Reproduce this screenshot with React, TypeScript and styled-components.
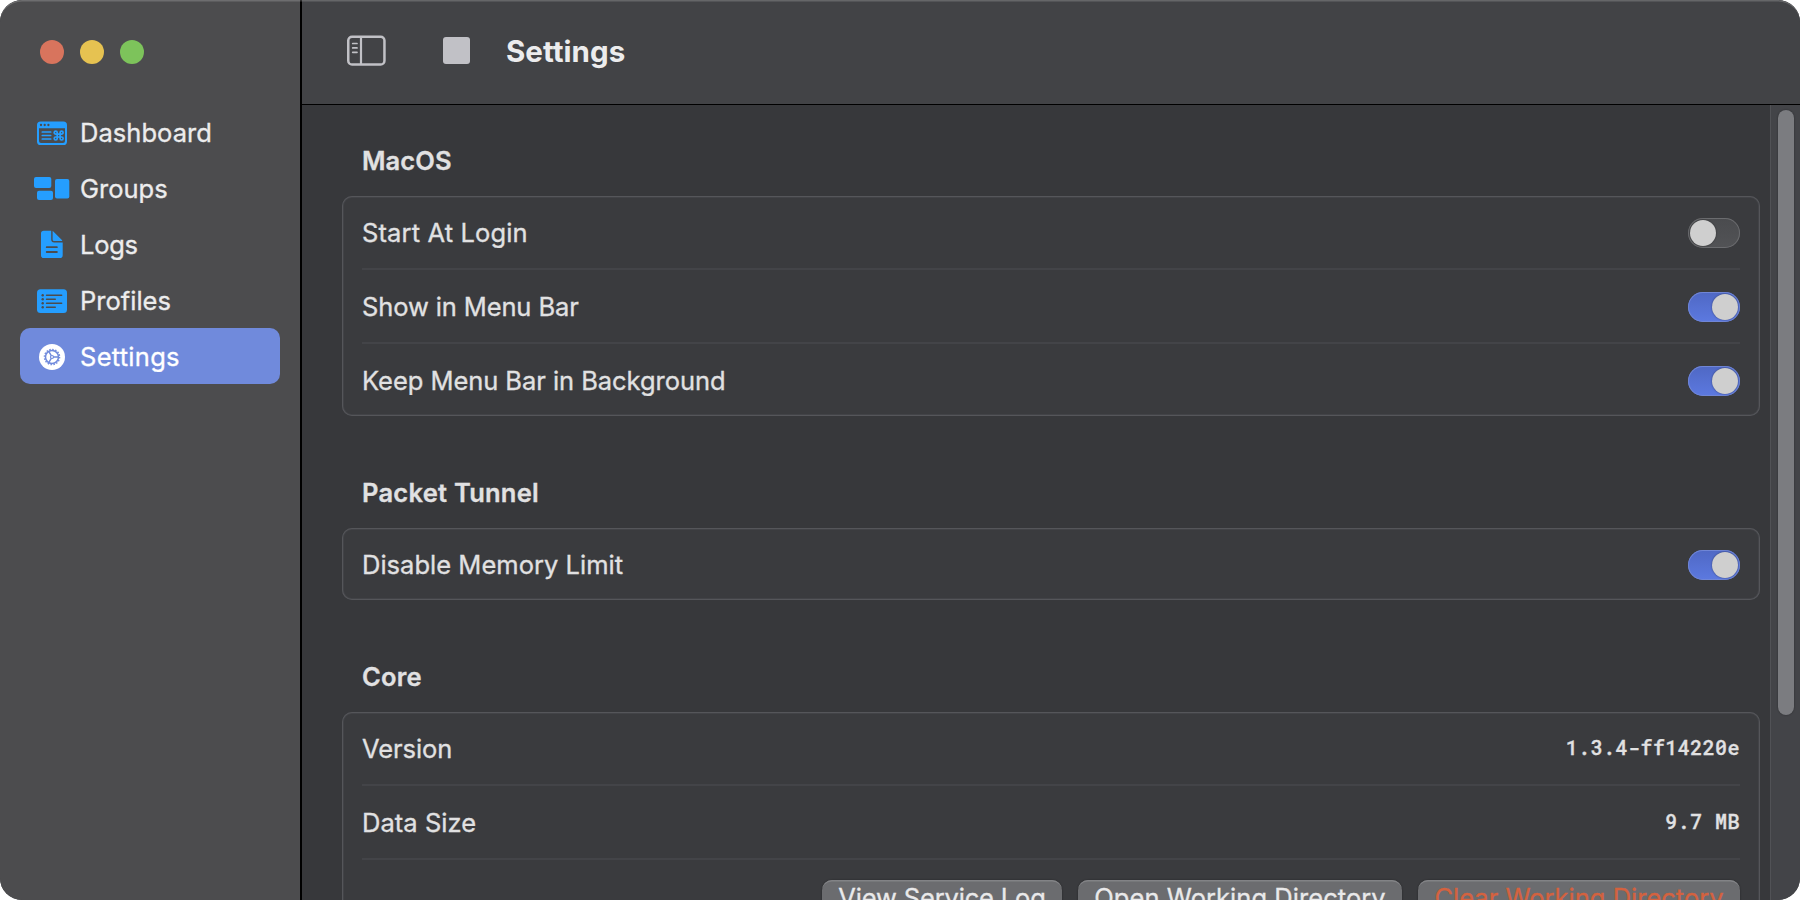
import React from 'react';
import styled, { createGlobalStyle, css } from 'styled-components';

const GlobalStyle = createGlobalStyle`
  *, *::before, *::after { box-sizing: border-box; }
  html, body { margin: 0; padding: 0; background: #ffffff; }
  body { overflow: hidden; }
`;

const Window = styled.div`
  position: relative;
  display: flex;
  width: 1800px;
  height: 900px;
  overflow: hidden;
  border-radius: 22px;
  background: #37383b;
  font-family: Inter, 'Liberation Sans', sans-serif;
  font-size: 25.5px;
  color: #e1e1e2;
  -webkit-text-stroke: 0.3px currentColor;

  &::after {
    content: '';
    position: absolute;
    inset: 0;
    border-radius: 22px;
    box-shadow: inset 0 2px 0 -0.5px rgba(255, 255, 255, 0.19);
    pointer-events: none;
  }
`;

const Sidebar = styled.aside`
  display: flex;
  flex-direction: column;
  width: 302px;
  flex: none;
  background: #4c4c4e;
  border-right: 2px solid #000000;
`;

const TrafficLights = styled.div`
  display: flex;
  gap: 16px;
  height: 104px;
  padding: 40px 0 0 40px;
`;

const Light = styled.span<{ $color: string }>`
  width: 24px;
  height: 24px;
  border-radius: 50%;
  background: ${(p) => p.$color};
`;

const Nav = styled.nav`
  display: flex;
  flex-direction: column;
  padding: 0 20px;
`;

const NavItem = styled.a<{ $active?: boolean }>`
  display: flex;
  align-items: center;
  height: 56px;
  padding-left: 12px;
  border-radius: 10px;
  color: #ececed;
  ${(p) =>
    p.$active &&
    css`
      background: #708adc;
      color: #ffffff;
    `}
`;

const NavIcon = styled.svg`
  width: 40px;
  height: 40px;
  flex: none;
`;

const NavLabel = styled.span<{ $tracking: number }>`
  padding-top: 1px;
  margin-left: 8px;
  letter-spacing: ${(p) => p.$tracking}px;
`;

const Main = styled.main`
  display: flex;
  flex: 1;
  flex-direction: column;
  min-width: 0;
`;

const Toolbar = styled.header`
  display: flex;
  align-items: center;
  flex: none;
  height: 105px;
  padding: 0 0 3px 45px;
  background: #424346;
  border-bottom: 1px solid #000000;
`;

const SidebarToggle = styled.svg`
  width: 39px;
  height: 31px;
`;

const StopButton = styled.span`
  width: 27px;
  height: 27px;
  margin-left: 57px;
  border-radius: 3px;
  background: #c1c1c6;
`;

const Title = styled.h1`
  margin: 0 0 0 36px;
  font-size: 29.5px;
  font-weight: 700;
  line-height: 40px;
  letter-spacing: 0.03px;
  -webkit-text-stroke: 0;
  color: #ececed;
`;

const Body = styled.div`
  display: flex;
  flex: 1;
  min-height: 0;
  overflow: hidden;
`;

const Content = styled.div`
  flex: 1;
  min-width: 0;
  padding: 35.5px 10px 0 40px;
`;

const Section = styled.section`
  & + & {
    margin-top: 56.5px;
  }
`;

const SectionTitle = styled.h2<{ $tracking: number }>`
  margin: 0 0 15.5px 20px;
  font-size: 25.5px;
  font-weight: 600;
  line-height: 40px;
  letter-spacing: ${(p) => p.$tracking}px;
`;

const Card = styled.div`
  padding: 0 20px;
  border-radius: 10px;
  background: #3a3b3e;
  box-shadow: inset 0 0 0 1px #55565a, inset 0 0 0 2px #424347;
`;

const Row = styled.div`
  display: flex;
  align-items: center;
  justify-content: space-between;
  height: 72px;
  padding-top: 2px;

  & + & {
    height: 74px;
    border-top: 2px solid #434448;
  }
`;

const RowLabel = styled.span<{ $tracking: number }>`
  padding-bottom: 2px;
  letter-spacing: ${(p) => p.$tracking}px;
`;

const RowValue = styled.span`
  padding-bottom: 4px;
  font-family: 'Roboto Mono', 'DejaVu Sans Mono', monospace;
  font-size: 20px;
  font-weight: 500;
  letter-spacing: 0.44px;
`;

const Switch = styled.span<{ $on: boolean }>`
  display: flex;
  justify-content: ${(p) => (p.$on ? 'flex-end' : 'flex-start')};
  width: 52px;
  height: 30px;
  padding: 2px;
  border-radius: 15px;
  background: ${(p) => (p.$on ? 'linear-gradient(#4f68c4, #5c79e0)' : 'linear-gradient(#4a4b4e, #525356)')};
  box-shadow: inset 0 0 0 1px ${(p) => (p.$on ? '#7086d6' : '#6b6c6f')};
`;

const Knob = styled.span`
  width: 26px;
  height: 26px;
  border-radius: 50%;
  background: #cfcfcf;
  box-shadow: 0 0 2px rgba(0, 0, 0, 0.45);
`;

const ButtonRow = styled.div`
  display: flex;
  justify-content: flex-end;
  gap: 16px;
  padding: 20px 0 16px;
  border-top: 2px solid #434448;
`;

const Button = styled.button<{ $width: number; $tracking: number; $danger?: boolean }>`
  width: ${(p) => p.$width}px;
  height: 40px;
  padding: 0 0 5px;
  border: 0;
  border-radius: 10px;
  background: #6b6c6f;
  box-shadow: inset 0 2px 0 -0.5px #828386, 0 0 2px rgba(0, 0, 0, 0.4);
  font: inherit;
  line-height: 35px;
  letter-spacing: ${(p) => p.$tracking}px;
  white-space: nowrap;
  color: ${(p) => (p.$danger ? '#d4623f' : '#e9e9ea')};
`;

const ScrollTrack = styled.div`
  flex: none;
  width: 30px;
  padding: 5px 0 0 7px;
  background: #434448;
  border-left: 1px solid #515256;
`;

const ScrollThumb = styled.div`
  width: 16px;
  height: 605px;
  border-radius: 8px;
  background: #7b7c80;
  box-shadow: 0 0 2px rgba(0, 0, 0, 0.4);
`;

const BLUE = '#259eff';
const SIDE = '#4c4c4e';

const DashboardIcon = () => (
  <NavIcon viewBox="0 -1 40 40">
    <path
      fillRule="evenodd"
      fill={BLUE}
      d="M8.600 8.400h22.800a3.600 3.600 0 0 1 3.600 3.600v16.400a3.600 3.600 0 0 1-3.600 3.600H8.600a3.600 3.600 0 0 1-3.600-3.600V12a3.600 3.600 0 0 1 3.600-3.600zM7 15.200v12.800a2 2 0 0 0 2 2h22a2 2 0 0 0 2-2V15.200z"
    />
    <g fill={SIDE}>
      <circle cx="9" cy="12" r="1.150" />
      <circle cx="12.700" cy="12" r="1.150" />
      <circle cx="16.400" cy="12" r="1.150" />
    </g>
    <path d="M10.300 19h8.400M10.300 22.500h8.400M10.300 26h8.400" stroke={BLUE} strokeWidth="1.700" strokeLinecap="round" />
    <path
      d="M25.200 21.100h2.900v2.900h-2.900zM25.200 21.100h-1.500a1.500 1.500 0 1 1 1.500-1.500zM28.100 21.100v-1.500a1.500 1.500 0 1 1 1.500 1.500zM28.100 24h1.500a1.500 1.500 0 1 1-1.500 1.500zM25.200 24v1.500a1.500 1.500 0 1 1-1.500-1.500z"
      fill="none"
      stroke={BLUE}
      strokeWidth="1.700"
    />
  </NavIcon>
);

const GroupsIcon = () => (
  <NavIcon viewBox="0 0 40 40" fill={BLUE}>
    <rect x="2" y="9" width="17.300" height="11" rx="2" />
    <rect x="5" y="22.700" width="16" height="9.300" rx="2" />
    <rect x="23" y="10.900" width="14.300" height="19.500" rx="2" />
  </NavIcon>
);

const LogsIcon = () => (
  <NavIcon viewBox="0 0 40 40">
    <path
      fill={BLUE}
      d="M11.800 6.700h7.400v8.800a3 3 0 0 0 3 3h8.500v12.700a2.800 2.800 0 0 1-2.800 2.800H11.800A2.800 2.800 0 0 1 9 31.200V9.500a2.800 2.800 0 0 1 2.800-2.800z"
    />
    <path fill={BLUE} d="M20.600 7.100q.500.200 1 .700l8 8q.500.500.700 1.100h-8.200a1.500 1.500 0 0 1-1.500-1.500z" />
    <path d="M14.700 23.200h10.200M14.700 28h10.200" stroke={SIDE} strokeWidth="1.800" strokeLinecap="round" />
  </NavIcon>
);

const ProfilesIcon = () => (
  <NavIcon viewBox="0 0 40 40">
    <rect x="5" y="9.300" width="30" height="23.700" rx="3.500" fill={BLUE} />
    <path
      d="M14.500 15.200h15.200M14.500 19.200h8.800M14.500 23.200h15.200M14.500 27.200h8.800"
      stroke={SIDE}
      strokeWidth="1.400"
      strokeLinecap="round"
    />
    <g fill={SIDE}>
      <circle cx="10.700" cy="15.200" r="1.200" />
      <circle cx="10.700" cy="19.200" r="1.200" />
      <circle cx="10.700" cy="23.200" r="1.200" />
      <circle cx="10.700" cy="27.200" r="1.200" />
    </g>
  </NavIcon>
);

const SettingsIcon = () => (
  <NavIcon viewBox="0 0 40 40">
    <circle cx="20" cy="21" r="13" fill="#ffffff" />
    <g fill="none" stroke="#708adc">
      <circle cx="20" cy="21" r="6.500" strokeWidth="1.500" />
      <circle cx="20" cy="21" r="7.600" strokeWidth="1.400" strokeDasharray="1.500 1.484" />
      <circle cx="20" cy="21" r="1.500" strokeWidth="1.200" />
      <path d="M21.500 21h5M19.250 19.700l-2.500-4.330M19.250 22.300l-2.500 4.330" strokeWidth="1.400" />
    </g>
  </NavIcon>
);

const navItems = [
  { label: 'Dashboard', tracking: 0.05, Icon: DashboardIcon },
  { label: 'Groups', tracking: 0, Icon: GroupsIcon },
  { label: 'Logs', tracking: -0.25, Icon: LogsIcon },
  { label: 'Profiles', tracking: 0.01, Icon: ProfilesIcon },
  { label: 'Settings', tracking: 0.27, Icon: SettingsIcon, active: true },
];

export default function App() {
  return (
    <>
      <GlobalStyle />
      <Window>
        <Sidebar>
          <TrafficLights>
            <Light $color="#d8745d" />
            <Light $color="#e6c251" />
            <Light $color="#7dc35b" />
          </TrafficLights>
          <Nav>
            {navItems.map(({ label, tracking, Icon, active }) => (
              <NavItem key={label} $active={active}>
                <Icon />
                <NavLabel $tracking={tracking}>{label}</NavLabel>
              </NavItem>
            ))}
          </Nav>
        </Sidebar>
        <Main>
          <Toolbar>
            <SidebarToggle viewBox="0 -0.5 39 31" fill="none" stroke="#c1c1c6">
              <rect x="1.250" y="1.250" width="36.200" height="27.800" rx="3.800" strokeWidth="2.500" />
              <path d="M14 1.500v27.500" strokeWidth="2.200" />
              <path d="M5.700 8h4.300M5.700 12.400h4.300M5.700 16.800h4.300" strokeWidth="1.700" strokeLinecap="round" />
            </SidebarToggle>
            <StopButton />
            <Title>Settings</Title>
          </Toolbar>
          <Body>
            <Content>
              <Section>
                <SectionTitle $tracking={0.1}>MacOS</SectionTitle>
                <Card>
                  <Row>
                    <RowLabel $tracking={0.14}>Start At Login</RowLabel>
                    <Switch $on={false}><Knob /></Switch>
                  </Row>
                  <Row>
                    <RowLabel $tracking={-0.12}>Show in Menu Bar</RowLabel>
                    <Switch $on><Knob /></Switch>
                  </Row>
                  <Row>
                    <RowLabel $tracking={-0.05}>Keep Menu Bar in Background</RowLabel>
                    <Switch $on><Knob /></Switch>
                  </Row>
                </Card>
              </Section>
              <Section>
                <SectionTitle $tracking={0.25}>Packet Tunnel</SectionTitle>
                <Card>
                  <Row>
                    <RowLabel $tracking={0.02}>Disable Memory Limit</RowLabel>
                    <Switch $on><Knob /></Switch>
                  </Row>
                </Card>
              </Section>
              <Section>
                <SectionTitle $tracking={0.2}>Core</SectionTitle>
                <Card>
                  <Row>
                    <RowLabel $tracking={-0.08}>Version</RowLabel>
                    <RowValue>1.3.4-ff14220e</RowValue>
                  </Row>
                  <Row>
                    <RowLabel $tracking={0.05}>Data Size</RowLabel>
                    <RowValue>9.7 MB</RowValue>
                  </Row>
                  <ButtonRow>
                    <Button $width={240} $tracking={-0.15}>View Service Log</Button>
                    <Button $width={324} $tracking={0.05}>Open Working Directory</Button>
                    <Button $width={322} $tracking={0} $danger>Clear Working Directory</Button>
                  </ButtonRow>
                </Card>
              </Section>
            </Content>
            <ScrollTrack>
              <ScrollThumb />
            </ScrollTrack>
          </Body>
        </Main>
      </Window>
    </>
  );
}
